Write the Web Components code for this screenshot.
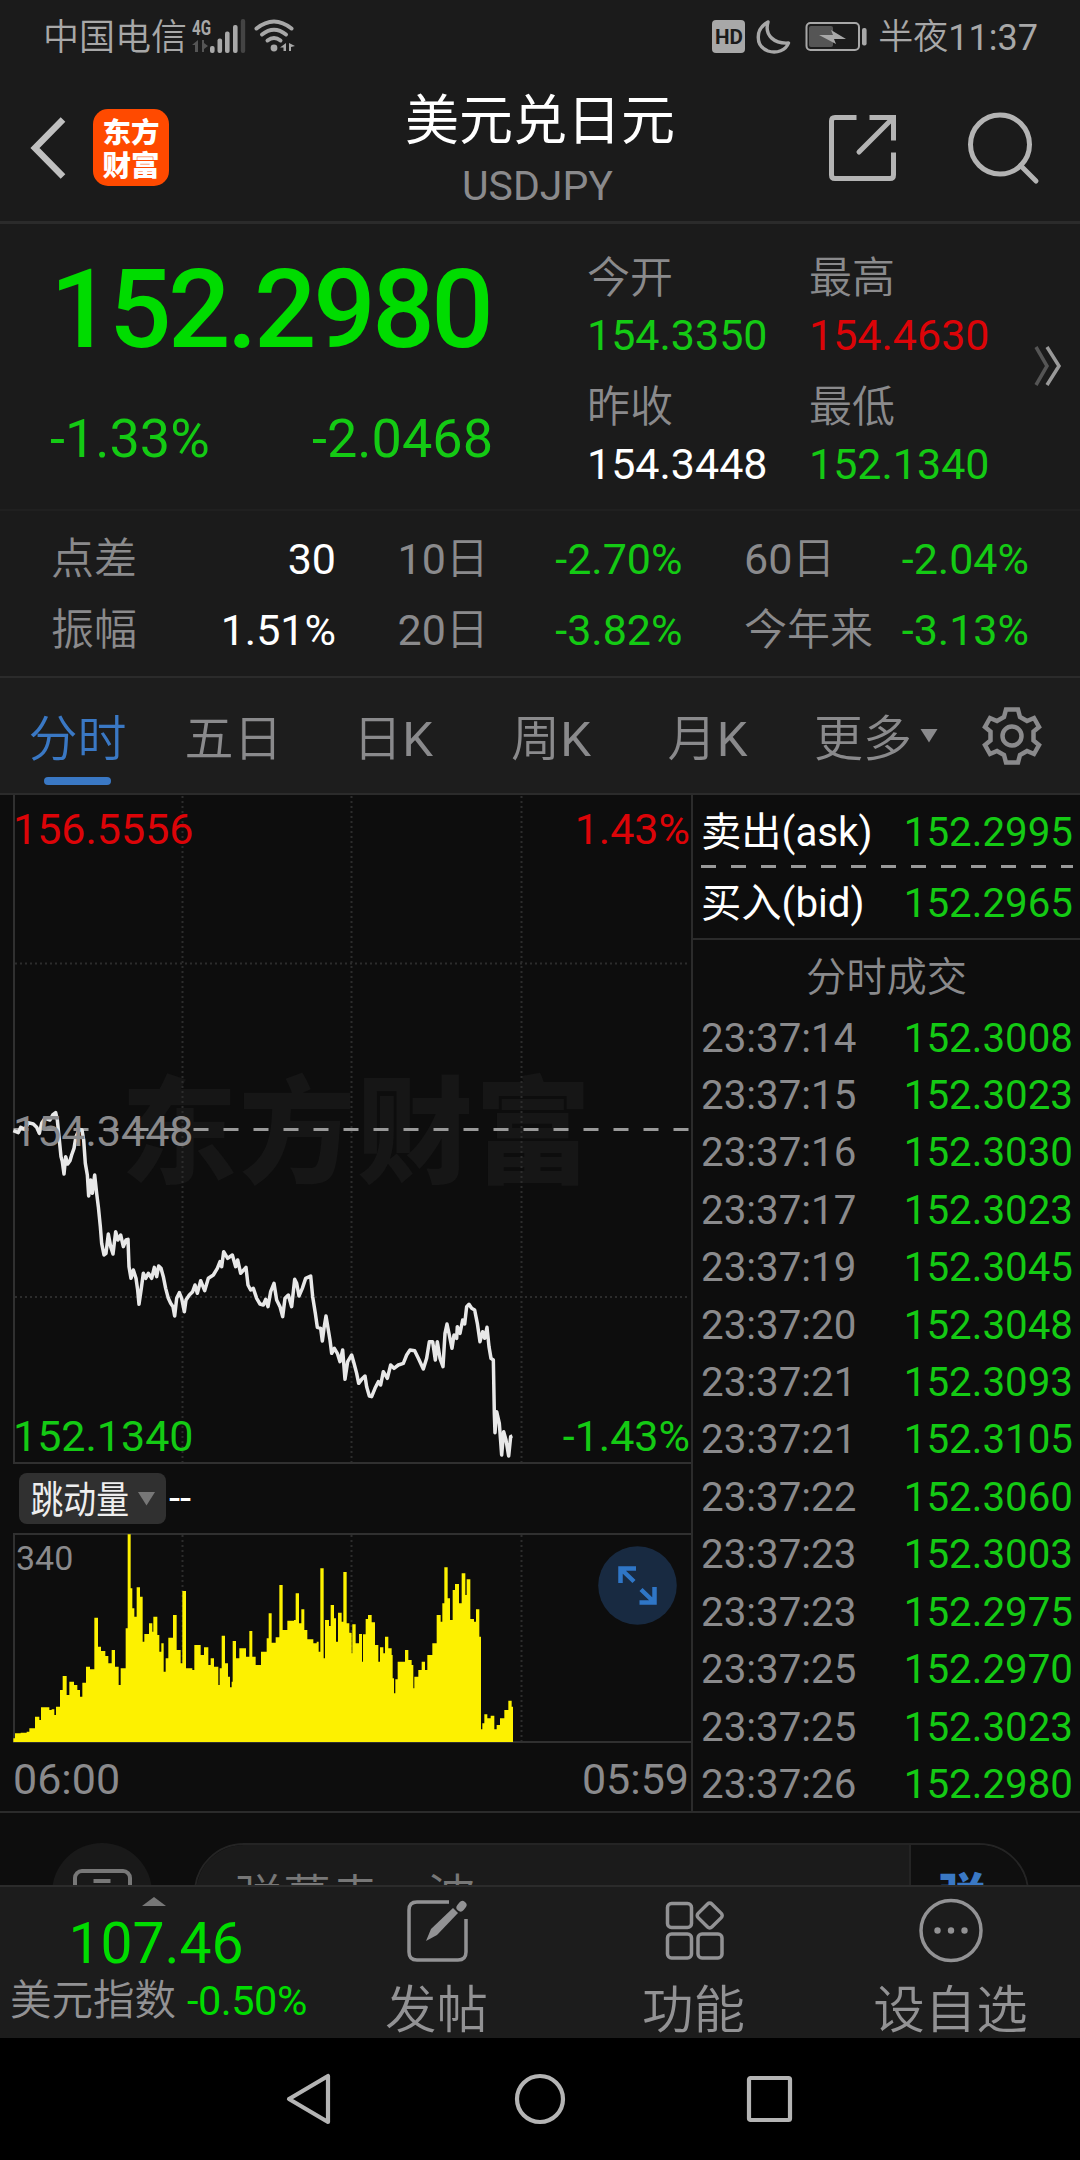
<!DOCTYPE html>
<html lang="zh-CN">
<head>
<meta charset="utf-8">
<title>美元兑日元</title>
<style>
  body {
    margin: 0;
    width: 1080px;
    height: 2160px;
    overflow: hidden;
    display: flex;
    flex-direction: column;
    background: #0d0d0d;
    color: #8a8a8c;
    font-family: Roboto, "Noto Sans CJK SC", sans-serif;
    --panel: #1b1b1b;
    --line: #2b2b2b;
    --up: #dc0408;
    --down: #14ca14;
    --blue: #3a78c4;
  }
</style>
</head>
<body>
<status-bar></status-bar>
<title-bar code="USDJPY">美元兑日元</title-bar>
<quote-panel></quote-panel>
<stats-panel>
  <stat-cell label="点差" tone="flat">30</stat-cell>
  <stat-cell label="10日">-2.70%</stat-cell>
  <stat-cell label="60日">-2.04%</stat-cell>
  <stat-cell label="振幅" tone="flat">1.51%</stat-cell>
  <stat-cell label="20日">-3.82%</stat-cell>
  <stat-cell label="今年来">-3.13%</stat-cell>
</stats-panel>
<period-tabs></period-tabs>
<market-view>
  <price-chart></price-chart>
  <trade-list slot="side"></trade-list>
</market-view>
<danmu-bar></danmu-bar>
<bottom-bar></bottom-bar>
<system-nav></system-nav>

<script>
  // Registra un elemento con su plantilla en un shadow root abierto.
  function define(name, html) {
    customElements.define(name, class extends HTMLElement {
      constructor() {
        super();
        this.attachShadow({ mode: 'open' });
        this.shadowRoot.innerHTML = typeof html === 'function' ? html(this) : html;
      }
    });
  }

  define('status-bar', `
    <style>
      :host {
        display: flex;
        align-items: center;
        justify-content: space-between;
        box-sizing: border-box;
        height: 76px;
        padding: 0 42px 0 43px;
        background: var(--panel);
        color: #a8a8a8;
        font-size: 36px;
        line-height: 76px;
      }
      div { display: flex; align-items: center; }
      .carrier { font-size: 36px; font-weight: 350; }
      .cjk { font-size: 35px; font-weight: 350; }
    </style>
    <div>
      <span class="carrier">中国电信</span>
      <svg width="112" height="76" viewBox="187 0 112 76" fill="#a8a8a8">
        <text x="192" y="34.5" font-size="20" font-weight="700" textLength="19" lengthAdjust="spacingAndGlyphs">4G</text>
        <path d="M198 40v12h-3v-7h-3zM202 40v12h2v-3l4-3-4-3v-3z" fill="#555"/>
        <rect x="210" y="46" width="4.6" height="7" rx="2"/>
        <rect x="217.500" y="38.500" width="4.600" height="14.500" rx="2"/>
        <rect x="225" y="31.500" width="4.600" height="21.500" rx="2"/>
        <rect x="233" y="25" width="4.600" height="28" rx="2"/>
        <rect x="240.800" y="19" width="4.400" height="34" rx="2" fill="#444"/>
        <g fill="none" stroke="#a8a8a8" stroke-width="4" stroke-linecap="round">
          <path d="M256.500 28.500Q274 14.500 291.500 28.500"/>
          <path d="M262 34.500Q274 25 286 34.500"/>
          <path d="M267.500 40.500Q274 35.500 280.500 40.500"/>
        </g>
        <circle cx="274" cy="48" r="3.400"/>
        <path d="M286 43v8h-2.500v-3.500H280zM289 43v8h2v-4l4-1z"/>
      </svg>
    </div>
    <div>
      <svg width="170" height="76" viewBox="708 0 170 76" fill="#a8a8a8">
        <rect x="712" y="20" width="33" height="33" rx="4"/>
        <text x="715" y="44" font-size="21" font-weight="700" fill="#1b1b1b" textLength="28" lengthAdjust="spacingAndGlyphs">HD</text>
        <path d="M768 22C755 29 755 46 768 51C777 54 786 50 788.500 43C775 44 764 36 768 22Z" fill="none" stroke="#a8a8a8" stroke-width="3.400" stroke-linejoin="round"/>
        <rect x="806.500" y="23" width="52.500" height="27" rx="4" fill="none" stroke="#a8a8a8" stroke-width="2"/>
        <rect x="809" y="26" width="24" height="21" rx="2" fill="#555"/>
        <rect x="862" y="28" width="4.600" height="17.500" rx="2"/>
        <path d="M819 35l14 0-2-5 15 9-12 0 2 5z"/>
      </svg>
      <span class="cjk">半夜</span><span>11:37</span>
    </div>
  `);

  define('title-bar', (host) => `
    <style>
      :host {
        display: grid;
        grid-template-columns: 330px 1fr 330px;
        height: 145px;
        background: var(--panel);
        border-bottom: 3px solid var(--line);
      }
      .left, .right { display: flex; align-items: center; padding-bottom: 2px; }
      .left { padding-left: 26px; gap: 25px; }
      .right { justify-content: flex-end; padding-right: 37px; }
      .logo {
        width: 76px;
        height: 77px;
        border-radius: 15px;
        background: #ff4a00;
        color: #fff;
        font: 900 28.500px/33px "Noto Sans CJK SC", sans-serif;
        text-align: center;
        box-sizing: border-box;
        padding-top: 5px;
      }
      .mid { text-align: center; }
      .name {
        padding-top: 13px;
        color: #fff;
        font-size: 54px;
        line-height: 66px;
      }
      .code { font-size: 41px; line-height: 50px; padding: 6px 5px 0 0; }
    </style>
    <div class="left">
      <svg width="42" height="70" viewBox="0 0 42 70" fill="none" stroke="#c0c0c0" stroke-width="6.500">
        <path d="M37 6.500 9 35 37 63.500"/>
      </svg>
      <div class="logo">东方<br>财富</div>
    </div>
    <div class="mid">
      <div class="name"><slot></slot></div>
      <div class="code">${host.getAttribute('code')}</div>
    </div>
    <div class="right">
      <svg width="220" height="80" viewBox="823 107 220 80" fill="none" stroke="#b4b4b4" stroke-width="5">
        <path d="M856.500 116.500H835q-3.500 0-3.500 3.500V174q0 3.500 3.500 3.500H890q3.500 0 3.500-3.500V151.500"/>
        <path d="M869.500 116.500H893.500V139.500"/>
        <path d="M893 117 859 151" stroke-linecap="round"/>
        <circle cx="1000" cy="143.500" r="29.500"/>
        <path d="M1020.500 164.500 1036 180" stroke-linecap="round"/>
      </svg>
    </div>
  `);

  define('quote-panel', `
    <style>
      :host {
        display: flex;
        height: 285px;
        background: var(--panel);
        border-bottom: 2px solid #202020;
      }
      .main { width: 587px; padding-top: 21px; box-sizing: border-box; }
      .price {
        padding-left: 50px;
        color: #00dc00;
        font-size: 110px;
        font-weight: 500;
        letter-spacing: -3.500px;
        line-height: 130px;
      }
      .change {
        display: flex;
        justify-content: space-between;
        margin-top: 34px;
        padding: 0 94px 0 50px;
        color: var(--down);
        font-size: 54px;
        line-height: 60px;
      }
      .grid {
        display: grid;
        grid-template-columns: 222px 224px;
        grid-auto-rows: 129px;
        padding-top: 26px;
        font-size: 43px;
        line-height: 57px;
      }
      .grid span { display: block; font-weight: 350; }
      .grid b { font-weight: 400; color: var(--down); }
      .grid .up { color: var(--up); }
      .grid .flat { color: #fff; }
      svg { margin-top: 121px; }
    </style>
    <div class="main">
      <div class="price">152.2980</div>
      <div class="change"><span>-1.33%</span><span>-2.0468</span></div>
    </div>
    <div class="grid">
      <div><span>今开</span><b>154.3350</b></div>
      <div><span>最高</span><b class="up">154.4630</b></div>
      <div><span>昨收</span><b class="flat">154.3448</b></div>
      <div><span>最低</span><b>152.1340</b></div>
    </div>
    <svg width="32" height="42" viewBox="0 0 32 42" fill="none" stroke-width="3.500">
      <path d="M3 2 14 21 3 40" stroke="#555"/>
      <path d="M14 2 26 21 14 40" stroke="#999"/>
    </svg>
  `);

  define('stats-panel', `
    <style>
      :host {
        display: grid;
        grid-template-columns: repeat(3, 285px);
        grid-auto-rows: 71px;
        column-gap: 61.500px;
        box-sizing: border-box;
        height: 167px;
        padding: 13px 0 0 51px;
        background: var(--panel);
        border-bottom: 2px solid var(--line);
      }
    </style>
    <slot></slot>
  `);

  define('stat-cell', (host) => `
    <style>
      :host {
        display: flex;
        justify-content: space-between;
        font-size: 43px;
        line-height: 71px;
        white-space: nowrap;
      }
      .label { font-weight: 350; }
      .label b { font-weight: 400; }
      .value { color: var(--down); }
      :host([tone="flat"]) .value { color: #fff; }
    </style>
    <span class="label">${host.getAttribute('label').replace(/\d+/, '<b>$&</b>')}</span>
    <span class="value"><slot></slot></span>
  `);

  define('period-tabs', `
    <style>
      :host {
        display: grid;
        grid-template-columns: 155px 157px 162px 154px 159px 1fr;
        height: 115px;
        background: #1d1d1d;
        border-bottom: 2px solid var(--line);
        font-size: 49px;
        font-weight: 350;
        line-height: 124px;
        text-align: center;
      }
      b { font-weight: 400; }
      .on { color: var(--blue); display: flex; flex-direction: column; align-items: center; }
      .on::after {
        content: "";
        width: 67px;
        height: 8px;
        margin-top: -25px;
        border-radius: 4px;
        background: var(--blue);
      }
      .more { display: flex; height: 115px; padding-left: 27px; }
    </style>
    <div class="on">分时</div>
    <div>五日</div>
    <div>日<b>K</b></div>
    <div>周<b>K</b></div>
    <div>月<b>K</b></div>
    <div class="more">
      <span>更多</span>
      <svg width="132" height="115" viewBox="912 678 132 115">
        <path d="M920.500 729h17l-8.500 13.500z" fill="#8a8a8c"/>
        <g fill="none" stroke="#8a8a8c" stroke-width="4.500">
          <path d="M1006 709.500H1018L1020 717L1027 721L1034 718L1039 727L1033.500 731.500V740.500L1039 745L1034 754L1027 751L1020 755L1018 762.500H1006L1004 755L997 751L990 754L985 745L990.500 740.500V731.500L985 727L990 718L997 721L1004 717Z"/>
          <circle cx="1012" cy="736" r="9.500"/>
        </g>
      </svg>
    </div>
  `);

  define('market-view', `
    <style>
      :host {
        display: flex;
        height: 1016px;
        border-bottom: 2px solid var(--line);
      }
    </style>
    <slot></slot><slot name="side"></slot>
  `);

  // Puntos de precio, en tercios de pixel.
  const PRICES = `40,272 55,278 62,262 75,268 85,248 100,252 110,262 118,280 125,250 135,235 150,240 158,225 167,218
    172,240 178,300 183,350 187,365 192,402 197,350 203,372 210,362 215,345 222,325 228,290 238,268 246,270 251,300
    256,370 262,405 266,468 272,420 277,460 284,405 290,460 295,500 301,560 305,610 312,645 318,640 325,582 332,620
    339,642 347,575 354,600 362,585 370,620 378,600 384,598 387,680 393,715 400,690 408,715 413,750 417,793 424,745
    430,700 437,715 445,700 455,715 463,682 470,710 476,678 483,685 490,710 497,745 505,775 512,790 519,800 524,828
    530,775 538,758 545,775 553,815 558,780 568,765 578,755 585,735 592,760 602,722 614,752 625,715 640,705 652,685
    660,665 665,680 671,635 683,655 697,645 707,680 713,660 722,700 738,682 744,735 752,750 760,745 770,775 780,792
    790,795 797,778 804,800 812,755 822,730 830,780 840,800 848,830 855,775 865,765 875,800 884,718 890,730 897,768
    907,745 917,715 932,708 938,770 946,820 952,862 962,865 967,903 972,865 978,828 985,870 990,900 995,940 1003,925
    1012,940 1020,965 1028,930 1035,1018 1043,965 1055,945 1062,970 1070,1000 1076,1030 1085,1018 1095,1008
    1100,1040 1108,1068 1115,1070 1125,1045 1135,1025 1142,1035 1150,995 1162,1015 1172,975 1182,985 1195,975
    1210,970 1220,945 1230,930 1244,932 1255,955 1270,987 1280,955 1288,905 1298,905 1306,960 1312,905 1320,955
    1329,980 1335,880 1341,852 1348,885 1356,925 1362,885 1370,895 1372,860 1380,880 1388,840 1394,852 1400,800
    1407,793 1415,805 1424,810 1432,850 1440,905 1448,875 1454,895 1461,862 1467,920 1473,955 1480,960 1483,1120
    1485,1178 1490,1115 1498,1150 1505,1245 1511,1175 1518,1200 1526,1248 1532,1190 1537,1188`;

  // Volumen: inicio de cada barra y su tope, en tercios de pixel.
  const VOLUMES = `40,865 45,850 62,848 80,845 88,835 105,800 118,810 123,772 148,780 155,778 163,795 168,770 180,720
    188,678 200,735 208,695 222,705 232,720 240,740 247,698 258,650 270,658 283,503 294,590 303,603 316,618 325,640
    335,600 345,650 356,705 362,655 377,535 383,253 392,415 397,475 403,500 410,412 420,440 428,575 433,552 447,520
    457,545 460,500 472,555 478,605 484,580 491,665 497,625 505,563 519,495 530,600 542,640 547,423 558,655 570,655
    577,660 583,585 602,615 612,592 625,645 632,625 642,650 655,705 659,655 665,557 675,640 684,680 690,712 695,695
    698,573 708,625 718,595 738,620 748,543 757,620 767,645 783,605 800,565 806,490 815,578 827,562 838,405 848,540
    862,512 882,510 887,430 897,520 904,478 913,540 922,568 940,580 950,575 956,605 961,355 971,625 975,510 987,528
    992,465 1002,505 1008,575 1014,488 1025,515 1030,366 1040,520 1048,548 1055,610 1057,523 1067,580 1077,552
    1086,635 1089,553 1097,507 1104,495 1115,517 1125,585 1135,635 1140,592 1150,610 1155,560 1165,595 1175,615
    1178,685 1182,730 1186,688 1193,635 1215,600 1225,630 1235,645 1240,715 1243,680 1255,660 1265,635 1275,660
    1282,615 1297,580 1310,495 1322,515 1327,460 1333,352 1343,445 1350,510 1358,420 1365,402 1377,460 1385,370
    1396,435 1400,388 1411,507 1422,515 1428,478 1438,560 1443,838 1447,820 1453,793 1462,805 1472,797 1483,838
    1490,825 1500,805 1513,780 1525,752 1535,770`;

  const volumePath = 'M40 876' + VOLUMES.trim().split(/\s+/).map((p) => {
    const [x, y] = p.split(',');
    return `H${x}V${y}`;
  }).join('') + 'H1539V876Z';

  define('price-chart', `
    <style>
      :host { display: flex; flex-direction: column; width: 691px; flex: none; }
      svg { display: block; flex: none; }
      text { font-size: 43px; }
      .grid { stroke: #2c2c2c; stroke-width: 2; stroke-dasharray: 2 3; }
      .frame { fill: none; stroke: #303030; stroke-width: 2; }
      .mark { font: 900 116px "Noto Sans CJK SC", sans-serif; fill: #161616; }
      .picker { display: flex; flex: none; align-items: center; height: 69px; padding-left: 19px; box-sizing: border-box; }
      .pill {
        display: flex;
        align-items: center;
        width: 147px;
        height: 51px;
        border-radius: 8px;
        background: #303030;
        color: #eee;
      }
      .pill text { font-size: 38px; fill: #eee; }
      .dash { color: #fff; font-size: 40px; margin-left: 3px; line-height: 50px; }
      .axis {
        display: flex;
        justify-content: space-between;
        height: 66px;
        padding: 0 2px 0 13px;
        font-size: 43px;
        line-height: 70px;
      }
    </style>
    <svg width="691" height="669" viewBox="0 795 691 669">
      <text class="mark" x="121" y="1174" textLength="470">东方财富</text>
      <path class="grid" d="M182.500 796V1462M351.500 796V1462M521.500 796V1462M15 963.500H690M15 1297H690"/>
      <path class="frame" d="M14 795V1463H691"/>
      <path d="M13.500 1129.500H690" stroke="#999" stroke-width="3" stroke-dasharray="15 15"/>
      <g transform="translate(0 1040) scale(.33333)">
        <polyline points="${PRICES}" fill="none" stroke="#e8e8e8" stroke-width="10.500" stroke-linejoin="round"/>
      </g>
      <text x="13" y="843.500" fill="#dc0408">156.5556</text>
      <text x="690" y="843.500" fill="#dc0408" text-anchor="end">1.43%</text>
      <text x="13" y="1146" fill="#8a8a8c">154.3448</text>
      <text x="13" y="1450.500" fill="#14ca14">152.1340</text>
      <text x="690" y="1450.500" fill="#14ca14" text-anchor="end">-1.43%</text>
    </svg>
    <div class="picker">
      <div class="pill">
        <svg width="147" height="51">
          <text x="11.500" y="40" textLength="98.500" lengthAdjust="spacingAndGlyphs">跳动量</text>
          <path d="M119 19h17l-8.500 13.500z" fill="#777"/>
        </svg>
      </div>
      <span class="dash">--</span>
    </div>
    <svg width="691" height="211" viewBox="0 1533 691 211">
      <path class="grid" d="M182.500 1535V1742M351.500 1535V1742M521.500 1535V1742"/>
      <path class="frame" d="M14 1743V1534H691M14 1742H691"/>
      <path transform="translate(0 1450) scale(.33333)" d="${volumePath}" fill="#fdf100"/>
      <text x="16" y="1570" fill="#8a8a8c" style="font-size:34px">340</text>
      <circle cx="637.500" cy="1585.500" r="39.300" fill="#182a41"/>
      <path d="M620.500 1583V1568.500H636M621 1569 634 1581.500M654.500 1587V1602.500H639.500M654 1602 641 1589.500" fill="none" stroke="#2f76c6" stroke-width="4.500"/>
    </svg>
    <div class="axis"><span>06:00</span><span>05:59</span></div>
  `);

  const TRADES = [
    ['23:37:14', '152.3008'],
    ['23:37:15', '152.3023'],
    ['23:37:16', '152.3030'],
    ['23:37:17', '152.3023'],
    ['23:37:19', '152.3045'],
    ['23:37:20', '152.3048'],
    ['23:37:21', '152.3093'],
    ['23:37:21', '152.3105'],
    ['23:37:22', '152.3060'],
    ['23:37:23', '152.3003'],
    ['23:37:23', '152.2975'],
    ['23:37:25', '152.2970'],
    ['23:37:25', '152.3023'],
    ['23:37:26', '152.2980'],
  ];

  define('trade-list', `
    <style>
      :host {
        display: flex;
        flex-direction: column;
        width: 387px;
        border-left: 2px solid var(--line);
        font-size: 40.300px;
        white-space: nowrap;
      }
      :host > *, .row, .title, .dashes { flex: none; }
      .row { display: flex; justify-content: space-between; padding: 0 7px 0 8px; }
      .row b { font-weight: 400; color: var(--down); }
      .quote { color: #fff; height: 70px; line-height: 71px; }
      .ask { padding-top: 3px; height: 67px; line-height: 70px; }
      .dashes {
        height: 3px;
        margin: 0 7px 0 8px;
        background: repeating-linear-gradient(90deg, #999 0 15px, transparent 15px 30px);
      }
      .title {
        height: 67px;
        padding-top: 4px;
        border-top: 2px solid var(--line);
        box-sizing: border-box;
        font-weight: 350;
        line-height: 67px;
        text-align: center;
      }
      .trade { height: 57.430px; line-height: 57.430px; }
      .trades { margin-top: 4.500px; }
    </style>
    <div class="row quote ask"><span>卖出(ask)</span><b>152.2995</b></div>
    <div class="dashes"></div>
    <div class="row quote"><span>买入(bid)</span><b>152.2965</b></div>
    <div class="title">分时成交</div>
    <div class="trades">
      ${TRADES.map(([time, price]) => `<div class="row trade"><span>${time}</span><b>${price}</b></div>`).join('')}
    </div>
  `);

  define('danmu-bar', `
    <style>
      :host {
        display: flex;
        gap: 42px;
        box-sizing: border-box;
        height: 72px;
        padding: 30px 51px 0 52px;
        overflow: hidden;
      }
      .round {
        width: 100px;
        height: 100px;
        flex: none;
        border-radius: 50%;
        background: #191919;
      }
      .field {
        display: flex;
        flex: 1;
        height: 100px;
        box-sizing: border-box;
        border: 2px solid #242424;
        border-radius: 50px;
        overflow: hidden;
        font-size: 48px;
        line-height: 106px;
      }
      .hint { flex: 1; padding-left: 39px; background: #1b1b1b; font-weight: 350; color: #777; }
      .send {
        width: 118px;
        border-left: 2px solid #242424;
        background: #0f0f0f;
        color: var(--blue);
        font-weight: 900;
        line-height: 103px;
        padding-left: 27px;
        box-sizing: border-box;
      }
    </style>
    <div class="round">
      <svg width="100" height="100" viewBox="52 1843 100 100" fill="none" stroke="#777" stroke-width="4">
        <rect x="75" y="1871" width="55" height="46" rx="7"/>
        <path d="M93.500 1881h17"/>
      </svg>
    </div>
    <div class="field"><div class="hint">弹幕走一波</div><div class="send">弹</div></div>
  `);

  define('tab-action', `
    <style>
      :host {
        display: flex;
        flex-direction: column;
        align-items: center;
        padding-top: 9px;
        color: #929294;
        font-size: 51.500px;
        font-weight: 350;
        line-height: 64px;
      }
      .label { margin-top: 15px; }
    </style>
    <slot name="icon"></slot>
    <div class="label"><slot></slot></div>
  `);

  define('bottom-bar', `
    <style>
      :host {
        display: grid;
        grid-template-columns: 308px repeat(3, 257px);
        height: 151px;
        background: #1c1c1c;
        border-top: 2px solid var(--line);
      }
      .index { display: flex; flex-direction: column; align-items: center; white-space: nowrap; padding-top: 10px; }
      .index svg { display: block; }
      .value { font-size: 57px; line-height: 70px; padding-left: 4px; margin-top: 3px; color: #00dc00; }
      .info { display: flex; gap: 11px; width: 298px; font-size: 41.500px; line-height: 42px; padding-top: 1px; padding-left: 10px; }
      .info span { font-weight: 350; color: #929294; }
      .info b { font-weight: 400; color: #00dc00; letter-spacing: -.500px; }
      tab-action svg { fill: none; stroke: #929294; stroke-width: 3.500; display: block; }
    </style>
    <div class="index">
      <svg width="24" height="9"><path d="M0 9 12 0 24 9z" fill="#777"/></svg>
      <div class="value">107.46</div>
      <div class="info"><span>美元指数</span><b>-0.50%</b></div>
    </div>
    <tab-action>
      <svg slot="icon" width="66" height="68" viewBox="405 1896 66 68">
        <path d="M450 1902H418q-8 0-8 8V1952q0 8 8 8H459q8 0 8-8V1919"/>
        <path d="M427 1941l5-12 22-21 5 5-21 22z" fill="#929294" stroke="none"/>
        <path d="M461.500 1907.500l2-2.500" stroke-width="8" stroke-linecap="round"/>
      </svg>
      发帖
    </tab-action>
    <tab-action>
      <svg slot="icon" width="66" height="68" viewBox="661 1896 66 68">
        <rect x="667.500" y="1903.500" width="24" height="24" rx="4"/>
        <rect x="667.500" y="1934" width="24" height="24" rx="4"/>
        <rect x="698" y="1934" width="24" height="24" rx="4"/>
        <rect x="-9.700" y="-9.700" width="19.400" height="19.400" rx="3" transform="translate(709.700 1915.500) rotate(45)"/>
      </svg>
      功能
    </tab-action>
    <tab-action>
      <svg slot="icon" width="66" height="68" viewBox="918 1896 66 68">
        <circle cx="951" cy="1930.500" r="30"/>
        <g fill="#929294" stroke="none">
          <circle cx="937.500" cy="1930.500" r="3.200"/>
          <circle cx="951" cy="1930.500" r="3.200"/>
          <circle cx="964.500" cy="1930.500" r="3.200"/>
        </g>
      </svg>
      设自选
    </tab-action>
  `);

  define('system-nav', `
    <style>
      :host {
        display: flex;
        justify-content: center;
        align-items: center;
        gap: 178px;
        height: 122px;
        background: #000;
      }
      svg { fill: none; stroke: #b4b4b4; stroke-width: 4.200; stroke-linejoin: round; }
    </style>
    <svg width="52" height="54"><path d="M44 4V50L5 27z"/></svg>
    <svg width="52" height="54"><circle cx="26" cy="27" r="23"/></svg>
    <svg width="52" height="54"><rect x="5" y="6" width="41" height="42" rx="1.500"/></svg>
  `);
</script>
</body>
</html>
